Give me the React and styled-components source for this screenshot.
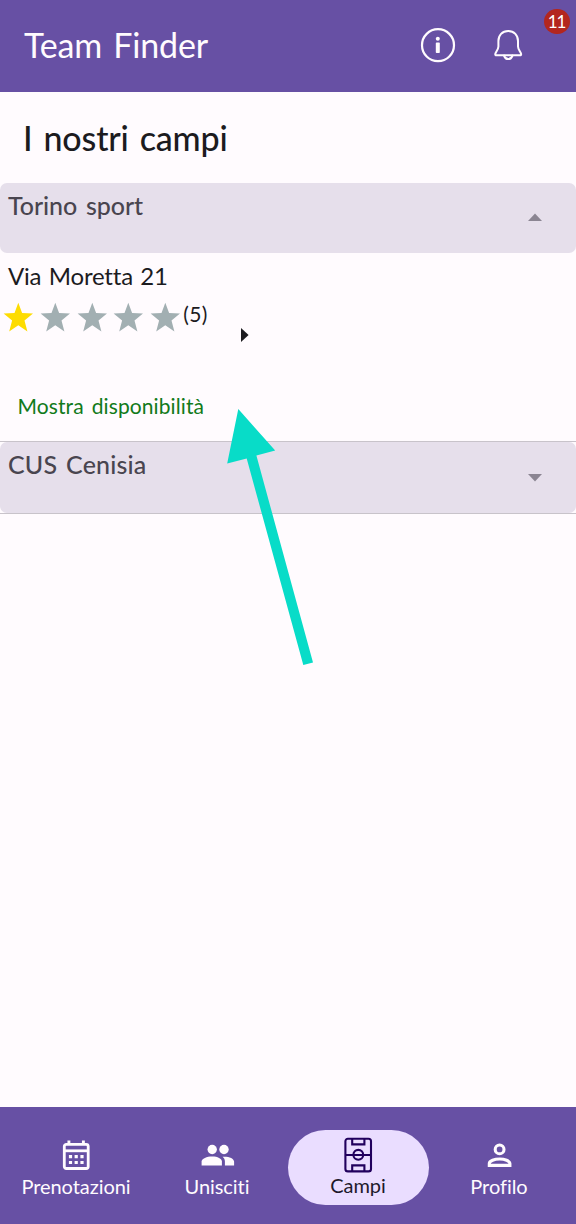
import React from 'react';
import styled, { createGlobalStyle } from 'styled-components';

const GlobalStyle = createGlobalStyle`
  * { box-sizing: border-box; }
  body {
    margin: 0;
    background: #fffbfe;
    color: #1c1b1f;
    font-family: Lato, "Noto Sans", sans-serif;
    font-variant-ligatures: none;
  }
`;

const Screen = styled.div`
  display: flex;
  flex-direction: column;
  width: 576px;
  height: 1224px;
  background: #fffbfe;
  position: relative;
  overflow: hidden;
`;

const TopBar = styled.header`
  display: flex;
  align-items: center;
  height: 92px;
  padding: 0 50px 2px 24px;
  background: #6750a4;
  color: #fffbfe;
  flex: none;
`;

const AppTitle = styled.h1`
  flex: 1;
  margin: 0;
  font-size: 34px;
  font-weight: 400;
  line-height: 40px;
  letter-spacing: -0.15px;
  word-spacing: 2.5px;
`;

const IconButton = styled.button`
  display: grid;
  place-items: center;
  width: 36px;
  height: 36px;
  margin-left: ${(p) => p.$gap || 0}px;
  padding: 0;
  border: 0;
  background: none;
  color: inherit;
`;

const Badge = styled.span`
  position: absolute;
  top: 9px;
  right: 6px;
  width: 26px;
  height: 25px;
  border-radius: 13px;
  background: #b3261e;
  color: #fff;
  font-size: 17px;
  line-height: 25px;
  letter-spacing: -1px;
  text-indent: -1px;
  text-align: center;
`;

const Main = styled.main`
  flex: 1;
`;

const PageTitle = styled.h2`
  height: 91px;
  margin: 0;
  padding: 25px 23px 0;
  font-size: 34px;
  font-weight: 500;
  line-height: 42px;
  letter-spacing: -0.15px;
  word-spacing: 2.5px;
`;

const Field = styled.section`
  border-bottom: 1px solid #c8c3ca;
`;

const FieldHeader = styled.div`
  display: flex;
  justify-content: space-between;
  height: ${(p) => p.$height}px;
  padding: 7px 34px 0 8px;
  border-radius: 7px;
  background: #e6dfeb;
  color: #49454f;
`;

const FieldName = styled.h3`
  margin: 0;
  font-size: 25px;
  font-weight: 500;
  line-height: 30px;
  letter-spacing: ${(p) => p.$spacing || 0}px;
  word-spacing: 2.5px;
`;

const Caret = styled.svg`
  margin-top: ${(p) => p.$top}px;
`;

const FieldBody = styled.div`
  height: 188px;
  padding-top: 8px;
`;

const Address = styled.p`
  margin: 0;
  padding-left: 8px;
  font-size: 24px;
  line-height: 30px;
  letter-spacing: -0.2px;
  word-spacing: 1.5px;
`;

const RatingRow = styled.div`
  display: flex;
  height: 55px;
  padding: 11px 0 0 3px;
`;

const Stars = styled.div`
  display: flex;
  gap: 5.8px;
`;

const Votes = styled.span`
  width: 57px;
  padding-left: 2px;
  font-size: 21px;
  line-height: 24px;
  letter-spacing: 0.4px;
`;

const MoreArrow = styled.svg`
  margin: 25px 0 0 2px;
`;

const AvailabilityLink = styled.a`
  display: block;
  margin-top: 46px;
  padding-left: 17.5px;
  color: #117a1a;
  font-size: 21px;
  line-height: 28px;
  letter-spacing: 0.1px;
  word-spacing: 2.5px;
`;

const NavBar = styled.nav`
  display: flex;
  height: 117px;
  padding: 23px 6px 0;
  background: #6750a4;
  flex: none;
`;

const NavItem = styled.div`
  display: flex;
  flex-direction: column;
  align-items: center;
  width: 141px;
  height: 75px;
  padding: ${(p) => (p.$active ? 7 : 8)}px 1px 0 0;
  border-radius: 38px;
  background: ${(p) => (p.$active ? '#eaddff' : 'transparent')};
  color: ${(p) => (p.$active ? '#21005d' : '#fffbfe')};
`;

const NavLabel = styled.span`
  font-size: 20px;
  line-height: 24px;
  letter-spacing: -0.05px;
  color: ${(p) => (p.$active ? '#1d192b' : 'inherit')};
`;

const Pointer = styled.svg`
  position: absolute;
  left: 220px;
  top: 400px;
  pointer-events: none;
`;

const InfoIcon = () => (
  <svg width="36" height="36" viewBox="0 0 36 36" fill="none">
    <circle cx="18" cy="18.2" r="16" stroke="currentColor" strokeWidth="2.2" />
    <circle cx="17.8" cy="11.7" r="2" fill="currentColor" />
    <rect x="15.8" y="15.6" width="4" height="10.4" rx="0.8" fill="currentColor" />
  </svg>
);

const BellIcon = () => (
  <svg width="36" height="36" viewBox="0 0 36 36" fill="none" stroke="currentColor" strokeWidth="2" strokeLinecap="round" strokeLinejoin="round">
    <path d="M18.2 4C12.2 4 8.4 8.3 8.4 14V19.5C8.4 22.4 5.7 25.2 5.3 26.9C5.1 27.9 5.6 28.3 6.4 28.3H30C30.8 28.3 31.3 27.9 31.1 26.9C30.7 25.2 28 22.4 28 19.5V14C28 8.3 24.2 4 18.2 4Z" />
    <path d="M14 28.6C14.8 31 16.3 32.1 18.2 32.1C20.1 32.1 21.7 31 22.5 28.6" />
  </svg>
);

const Star = ({ filled }) => (
  <svg width="31" height="31" viewBox="0 0 31 31">
    <path
      d="M15.3 0.7L19.1 11.1L30 11.6L21.5 18.4L24.4 29.4L15.3 23.2L6.2 29.4L9.1 18.4L0.6 11.6L11.5 11.1Z"
      fill={filled ? '#fddc02' : '#a2afb2'}
    />
  </svg>
);

const CalendarIcon = () => (
  <svg width="34" height="36" viewBox="0 0 34 36" fill="none">
    <rect x="5.3" y="6.3" width="23.9" height="24.2" rx="2" stroke="currentColor" strokeWidth="2.8" />
    <path d="M9.9 2.5V6M24.4 2.5V6" stroke="currentColor" strokeWidth="2.9" />
    <path d="M5 12.8H29" stroke="currentColor" strokeWidth="2.8" />
    <path
      d="M9.9 17h3.2v3.2h-3.2zM15.6 17h3.2v3.2h-3.2zM21.4 17h3.2v3.2h-3.2zM9.9 22.9h3.2v3.2h-3.2zM15.6 22.9h3.2v3.2h-3.2zM21.4 22.9h3.2v3.2h-3.2z"
      fill="currentColor"
    />
  </svg>
);

const PeopleIcon = () => (
  <svg width="36" height="36" viewBox="0 0 36 36" fill="currentColor">
    <circle cx="13.2" cy="11.5" r="4.7" />
    <circle cx="25" cy="11.5" r="4.7" />
    <path d="M2.6 27.6V23.6C2.6 20.4 7.8 18.4 13.2 18.4C18.6 18.4 22.9 20.4 22.9 23.6V27.6Z" />
    <path d="M25.9 27.6V23.4C25.9 21.2 25 19.8 23.6 18.7C29.5 18.2 35.1 20.3 35.1 23.6V27.6Z" />
  </svg>
);

const PitchIcon = () => (
  <svg width="34" height="36" viewBox="0 0 34 36" fill="none" stroke="currentColor" strokeWidth="2.1">
    <rect x="4.4" y="1.8" width="25.6" height="32.6" rx="2.5" />
    <path d="M4 18H30M11.2 2V7.4H23.4V2M11.2 34V28.4H23.4V34" />
    <circle cx="17.3" cy="17.8" r="4.9" />
  </svg>
);

const PersonIcon = () => (
  <svg width="36" height="36" viewBox="0 0 36 36" fill="none" stroke="currentColor" strokeWidth="3.1">
    <circle cx="18.6" cy="11.4" r="4.4" />
    <path d="M8.3 27.4V25.6C8.3 22.8 13.6 21 18.6 21S28.9 22.8 28.9 25.6V27.4Z" />
  </svg>
);

const tabs = [
  { label: 'Prenotazioni', Icon: CalendarIcon },
  { label: 'Unisciti', Icon: PeopleIcon },
  { label: 'Campi', Icon: PitchIcon, active: true },
  { label: 'Profilo', Icon: PersonIcon },
];

export default function App() {
  return (
    <>
      <GlobalStyle />
      <Screen>
        <TopBar>
          <AppTitle>Team Finder</AppTitle>
          <IconButton aria-label="Info"><InfoIcon /></IconButton>
          <IconButton aria-label="Notifiche" $gap={34}><BellIcon /></IconButton>
          <Badge>11</Badge>
        </TopBar>

        <Main>
          <PageTitle>I nostri campi</PageTitle>

          <Field>
            <FieldHeader $height={70}>
              <FieldName $spacing={-0.05}>Torino sport</FieldName>
              <Caret $top={23} width="14" height="8"><path d="M0 8L7 0.5L14 8Z" fill="#8b8592" /></Caret>
            </FieldHeader>
            <FieldBody>
              <Address>Via Moretta 21</Address>
              <RatingRow>
                <Stars>
                  {[1, 2, 3, 4, 5].map((n) => <Star key={n} filled={n === 1} />)}
                </Stars>
                <Votes>(5)</Votes>
                <MoreArrow width="9" height="16"><path d="M1 1L8.6 8L1 15Z" fill="#1c1b1f" /></MoreArrow>
              </RatingRow>
              <AvailabilityLink>Mostra disponibilità</AvailabilityLink>
            </FieldBody>
          </Field>

          <Field>
            <FieldHeader $height={71}>
              <FieldName $spacing={0.15}>CUS Cenisia</FieldName>
              <Caret $top={25} width="14" height="8"><path d="M0 0L7 7.5L14 0Z" fill="#8b8592" /></Caret>
            </FieldHeader>
          </Field>
        </Main>

        <NavBar>
          {tabs.map(({ label, Icon, active }) => (
            <NavItem key={label} $active={active}>
              <Icon />
              <NavLabel $active={active}>{label}</NavLabel>
            </NavItem>
          ))}
        </NavBar>

        <Pointer width="100" height="270" viewBox="0 0 100 270">
          <path d="M18.3 9L55.2 50.5L36.4 55.6L93 262.5L83.3 265L26.7 58.5L7.2 63.5Z" fill="#08dcc8" />
        </Pointer>
      </Screen>
    </>
  );
}
